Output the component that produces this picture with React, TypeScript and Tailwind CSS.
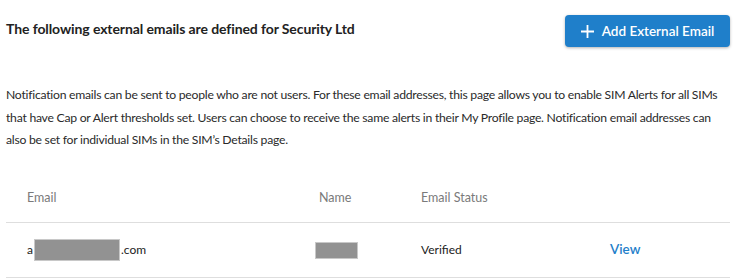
const rows = [{ prefix: "a", suffix: ".com", status: "Verified" }];

const App = () => {
  return (
    <div
      className="w-[744px] h-[278px] bg-white px-[6px] text-[#222] overflow-hidden"
      style={{ fontFamily: "Lato, 'Open Sans', sans-serif" }}
    >
      <div className="flex items-start justify-between pt-[15px] pr-[8px]">
        <h1 className="pt-[4px] text-[14px] font-bold leading-[20px] tracking-[-0.1px] text-[#222]">
          The following external emails are defined for Security Ltd
        </h1>
        <button className="flex h-[32px] w-[165px] items-center justify-center gap-[8px] rounded-[4px] bg-[#1f7fca] text-[13.5px] font-semibold text-white shadow-[0_1px_3px_rgba(0,0,0,0.3)]">
          <svg width="13" height="13" viewBox="0 0 13 13" fill="none">
            <path d="M6.5 0v13M0 6.5h13" stroke="white" strokeWidth="1.8" />
          </svg>
          Add External Email
        </button>
      </div>

      <p className="mt-[37px] w-[726px] text-[12.2px] leading-[22.5px] tracking-[-0.25px] text-[#2a2a2a]">
        Notification emails can be sent to people who are not users. For these email
        addresses, this page allows you to enable SIM Alerts for all SIMs that have Cap or
        Alert thresholds set. Users can choose to receive the same alerts in their My
        Profile page. Notification email addresses can also be set for individual SIMs in
        the SIM’s Details page.
      </p>

      <div className="mt-[36px] w-[724px]">
        <div className="grid grid-cols-[292px_102px_189px_1fr] border-b border-[#dedede] pb-[14px] pl-[21px] text-[12.5px] leading-[20px] text-[#7a7a7a]">
          <span>Email</span>
          <span>Name</span>
          <span>Email Status</span>
          <span />
        </div>
        {rows.map((row, i) => (
          <div
            key={i}
            className="grid h-[55px] grid-cols-[292px_102px_189px_1fr] items-center border-b border-[#dedede] pl-[21px] text-[12px] text-[#222]"
          >
            <span className="flex items-center">
              {row.prefix}
              <span className="mx-[1px] inline-block h-[22px] w-[86px] border border-[#c8c8c8] bg-[#929292]" />
              {row.suffix}
            </span>
            <span className="flex -ml-[4px]">
              <span className="inline-block mt-[2px] h-[17px] w-[43px] border border-[#c8c8c8] bg-[#929292]" />
            </span>
            <span>{row.status}</span>
            <a className="text-[13.5px] font-semibold text-[#1f7fca]">View</a>
          </div>
        ))}
      </div>
    </div>
  );
};

export default App;
